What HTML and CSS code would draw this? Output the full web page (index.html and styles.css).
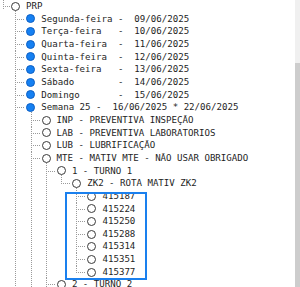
FILE: index.html
```html
<!DOCTYPE html>
<html lang="pt">
<head>
<meta charset="utf-8">
<title>Árvore PRP</title>
<link rel="stylesheet" href="styles.css">
</head>
<body>
<div class="pane">
  <ul class="tree root">
    <li class="end">
      <div class="row"><span class="node"></span><span class="label">PRP</span></div>
      <ul>
        <li><div class="row"><span class="node fill"></span><span class="label">Segunda-feira -  09/06/2025</span></div></li>
        <li><div class="row"><span class="node fill"></span><span class="label">Terça-feira   -  10/06/2025</span></div></li>
        <li><div class="row"><span class="node fill"></span><span class="label">Quarta-feira  -  11/06/2025</span></div></li>
        <li><div class="row"><span class="node fill"></span><span class="label">Quinta-feira  -  12/06/2025</span></div></li>
        <li><div class="row"><span class="node fill"></span><span class="label">Sexta-feira   -  13/06/2025</span></div></li>
        <li><div class="row"><span class="node fill"></span><span class="label">Sábado        -  14/06/2025</span></div></li>
        <li><div class="row"><span class="node fill"></span><span class="label">Domingo       -  15/06/2025</span></div></li>
        <li>
          <div class="row"><span class="node fill"></span><span class="label">Semana 25 -  16/06/2025 * 22/06/2025</span></div>
          <ul>
            <li><div class="row"><span class="node"></span><span class="label">INP - PREVENTIVA INSPEÇÃO</span></div></li>
            <li><div class="row"><span class="node"></span><span class="label">LAB - PREVENTIVA LABORATORIOS</span></div></li>
            <li><div class="row"><span class="node"></span><span class="label">LUB - LUBRIFICAÇÃO</span></div></li>
            <li>
              <div class="row"><span class="node"></span><span class="label">MTE - MATIV MTE - NÃO USAR OBRIGADO</span></div>
              <ul>
                <li>
                  <div class="row"><span class="node"></span><span class="label">1 - TURNO 1</span></div>
                  <ul>
                    <li class="end">
                      <div class="row"><span class="node"></span><span class="label">ZK2 - ROTA MATIV ZK2</span></div>
                      <ul class="marked">
                        <li><div class="row"><span class="node"></span><span class="label">415187</span></div></li>
                        <li><div class="row"><span class="node"></span><span class="label">415224</span></div></li>
                        <li><div class="row"><span class="node"></span><span class="label">415250</span></div></li>
                        <li><div class="row"><span class="node"></span><span class="label">415288</span></div></li>
                        <li><div class="row"><span class="node"></span><span class="label">415314</span></div></li>
                        <li><div class="row"><span class="node"></span><span class="label">415351</span></div></li>
                        <li class="end"><div class="row"><span class="node"></span><span class="label">415377</span></div></li>
                        <div class="highlight"></div>
                      </ul>
                    </li>
                  </ul>
                </li>
                <li>
                  <div class="row"><span class="node"></span><span class="label">2 - TURNO 2</span></div>
                </li>
              </ul>
            </li>
          </ul>
        </li>
      </ul>
    </li>
  </ul>
</div>
<div class="scrollbar"><div class="track"></div><div class="thumb"></div></div>
</body>
</html>
```

FILE: styles.css
```css
html, body {
  margin: 0;
  padding: 0;
  background: #ffffff;
}

body {
  display: flex;
  width: 300px;
  height: 287px;
  overflow: hidden;
  font-family: "DejaVu Sans Mono", "Liberation Mono", monospace;
  font-size: 9.1px;
  color: #1e1e1e;
}

.pane {
  flex: 1;
  overflow: hidden;
}

ul {
  list-style: none;
  margin: 0;
  padding: 0 0 0 15.3px;
}

ul.root {
  padding-left: 11px;
}

li {
  position: relative;
}

/* vertical connector from parent */
li::before {
  content: "";
  position: absolute;
  left: -11px;
  top: 0;
  bottom: 0;
  width: 1px;
  background: repeating-linear-gradient(to bottom, #9a9a9a 0 1px, transparent 1px 2px);
}

ul > li:first-child::before {
  top: -2px;
}

li.end::before {
  bottom: auto;
  height: 6.5px;
}

ul > li.end:first-child::before {
  height: 8.5px;
}

/* horizontal connector */
li::after {
  content: "";
  position: absolute;
  left: -11px;
  top: 6px;
  width: 10px;
  height: 1px;
  background: repeating-linear-gradient(to right, #9a9a9a 0 1px, transparent 1px 2px);
}

ul.root > li::before {
  left: -8px;
  top: 0;
  height: 6.5px;
}

ul.root > li::after {
  left: -8px;
  width: 7px;
}

.row {
  display: flex;
  align-items: center;
  gap: 6px;
  height: 12.67px;
  white-space: pre;
}

.node {
  flex: none;
  box-sizing: border-box;
  width: 9px;
  height: 9px;
  border-radius: 50%;
  border: 1px solid #3a3a3a;
  background: #ffffff;
}

.node.fill {
  border-color: #0d5fc4;
  background: #1580f2;
}

.label {
  line-height: 12.67px;
}

ul.marked {
  position: relative;
}

.highlight {
  position: absolute;
  left: -7px;
  top: 2px;
  width: 82px;
  height: 88px;
  box-sizing: border-box;
  border: 2.5px solid #1a80ee;
}

.scrollbar {
  flex: none;
  width: 5px;
  display: flex;
  flex-direction: column;
}

.track {
  height: 63px;
  background: #f0f0f0;
}

.thumb {
  flex: 1;
  background: #cdcdcd;
}
```
